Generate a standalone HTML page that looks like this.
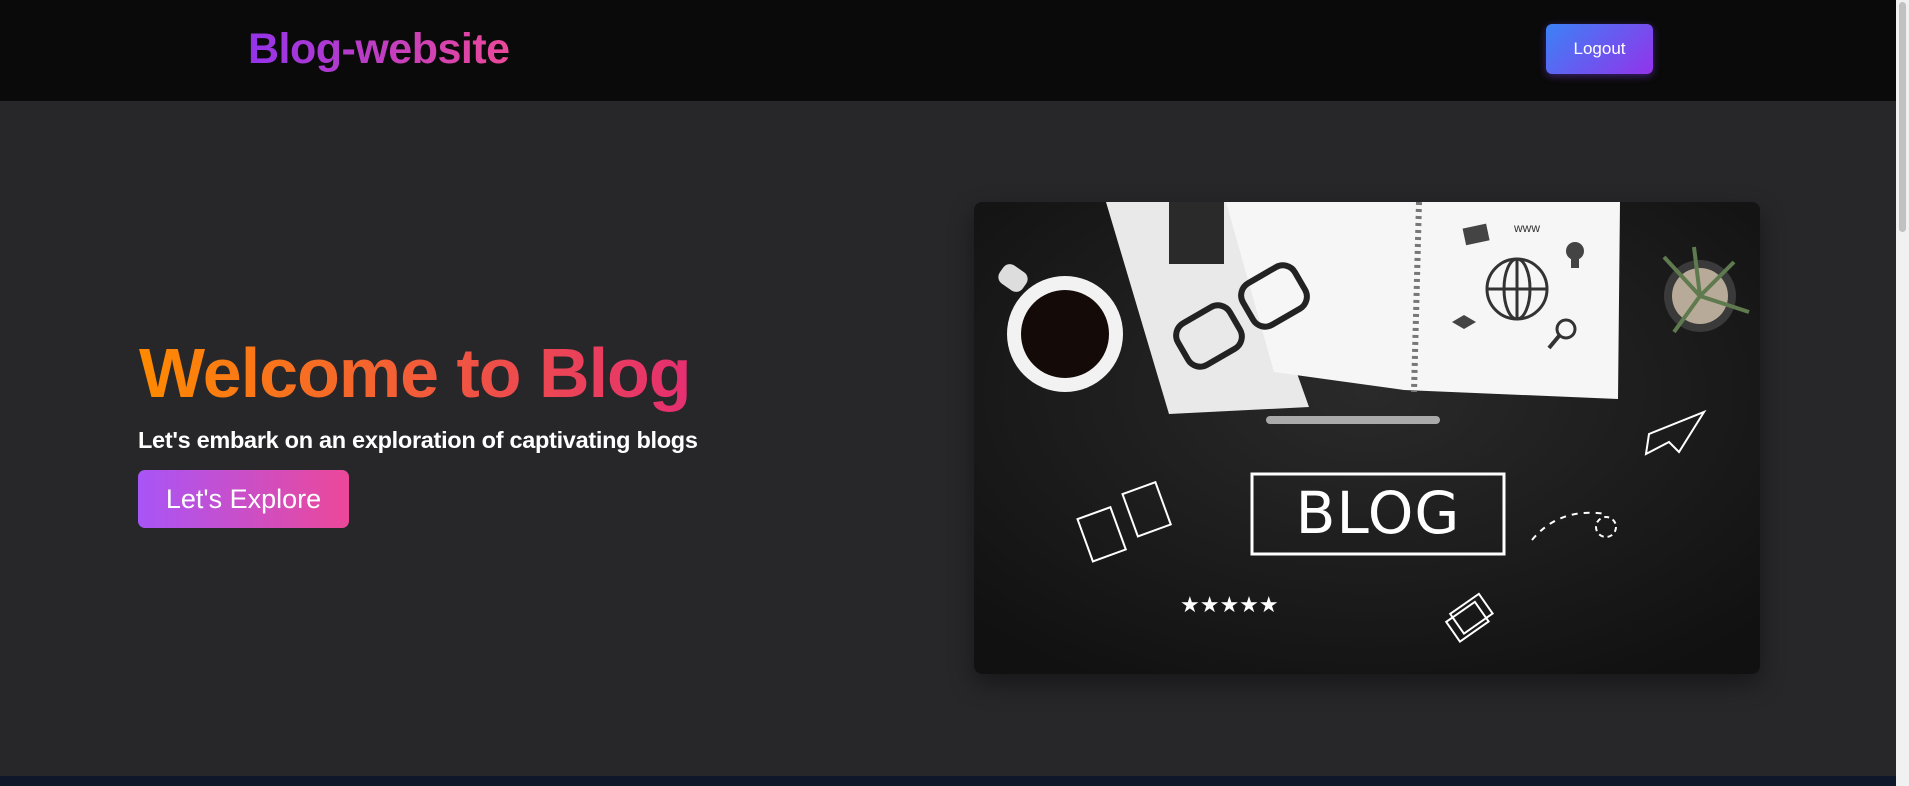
<!DOCTYPE html>
<html><head><meta charset="utf-8"><style>
*{margin:0;padding:0;box-sizing:border-box}
html,body{width:1909px;height:786px;overflow:hidden;background:#27272a;font-family:"Liberation Sans",sans-serif}
.hdr{position:absolute;left:0;top:0;width:1896px;height:101px;background:#0a0a0a}
.logo{position:absolute;left:248px;top:25px;font-size:43px;font-weight:bold;background:linear-gradient(90deg,#9333ea,#ec4899);-webkit-background-clip:text;background-clip:text;color:transparent;letter-spacing:-0.5px}
.logout{position:absolute;left:1546px;top:24px;width:107px;height:50px;border-radius:6px;background:linear-gradient(135deg,#3b82f6,#9333ea);color:#fff;font-size:17px;display:flex;align-items:center;justify-content:center;box-shadow:0 2px 8px rgba(120,60,220,.5)}
.sb{position:absolute;right:0;top:0;width:13px;height:786px;background:#f1f1f1}
.sb div{position:absolute;left:3px;top:2px;width:7px;height:230px;background:#c1c1c1;border-radius:4px}
h1{position:absolute;left:139px;top:331px;font-size:70px;font-weight:bold;letter-spacing:-1px;background:linear-gradient(90deg,#ff8a00,#e52e71);-webkit-background-clip:text;background-clip:text;color:transparent;line-height:84px}
.sub{position:absolute;left:138px;top:427px;font-size:23.5px;font-weight:bold;color:#fff;letter-spacing:-0.3px}
.btn{position:absolute;left:138px;top:470px;width:211px;height:58px;border-radius:7px;background:linear-gradient(90deg,#a855f7,#ec4899);color:#fff;font-size:27px;display:flex;align-items:center;justify-content:center}
.img{position:absolute;left:974px;top:202px;width:786px;height:472px;border-radius:8px;overflow:hidden;box-shadow:0 10px 25px rgba(0,0,0,.4)}
.foot{position:absolute;left:0;top:776px;width:1896px;height:10px;background:#0f172a}
</style></head><body>
<div class="hdr"><div class="logo">Blog-website</div><div class="logout">Logout</div></div>
<div class="sb"><div></div></div>
<h1>Welcome to Blog</h1>
<div class="sub">Let's embark on an exploration of captivating blogs</div>
<div class="btn">Let's Explore</div>
<div class="img">
<svg width="786" height="472" viewBox="0 0 786 472">
<defs><radialGradient id="bg" cx="50%" cy="40%" r="70%"><stop offset="0" stop-color="#2a2a2a"/><stop offset="1" stop-color="#111"/></radialGradient></defs>
<rect width="786" height="472" fill="url(#bg)"/>
<polygon points="132,0 262,0 335,205 195,212" fill="#e9e9e9"/>
<rect x="195" y="0" width="55" height="62" fill="#2a2a2a"/>
<polygon points="252,0 646,0 644,197 430,188 300,170" fill="#f6f6f6"/>
<line x1="445" y1="0" x2="440" y2="190" stroke="#777" stroke-width="6" stroke-dasharray="3 4"/>
<g fill="none" stroke="#222" stroke-width="6">
<rect x="205" y="110" width="60" height="48" rx="14" transform="rotate(-30 235 134)"/>
<rect x="270" y="70" width="60" height="48" rx="14" transform="rotate(-30 300 94)"/>
</g>
<circle cx="91" cy="132" r="58" fill="#f2f2f2"/>
<rect x="25" y="65" width="28" height="22" rx="8" fill="#ddd" transform="rotate(35 39 76)"/>
<circle cx="91" cy="132" r="44" fill="#140b08"/>
<circle cx="543" cy="87" r="30" fill="none" stroke="#333" stroke-width="3"/>
<ellipse cx="543" cy="87" rx="13" ry="30" fill="none" stroke="#333" stroke-width="3"/>
<line x1="513" y1="87" x2="573" y2="87" stroke="#333" stroke-width="3"/>
<line x1="543" y1="57" x2="543" y2="117" stroke="#333" stroke-width="3"/>
<rect x="490" y="24" width="24" height="17" fill="#444" transform="rotate(-12 502 32)"/>
<text x="540" y="30" font-size="12" fill="#333" font-family="Liberation Sans">www</text>
<circle cx="601" cy="49" r="9" fill="#444"/><rect x="597" y="56" width="8" height="10" fill="#444"/>
<polygon points="478,120 490,113 502,120 490,127" fill="#444"/>
<circle cx="592" cy="127" r="9" fill="none" stroke="#333" stroke-width="3"/><line x1="585" y1="134" x2="575" y2="146" stroke="#333" stroke-width="4"/>
<circle cx="726" cy="94" r="36" fill="#3a3a3a"/><circle cx="726" cy="94" r="28" fill="#b8aa98"/>
<g stroke="#5e7a4e" stroke-width="4"><line x1="726" y1="94" x2="690" y2="55"/><line x1="726" y1="94" x2="760" y2="60"/><line x1="726" y1="94" x2="775" y2="110"/><line x1="726" y1="94" x2="700" y2="130"/><line x1="726" y1="94" x2="720" y2="45"/></g>
<rect x="292" y="214" width="174" height="8" rx="4" fill="#aaa"/>
<rect x="278" y="272" width="252" height="80" fill="none" stroke="#fff" stroke-width="3"/>
<text x="404" y="331" text-anchor="middle" font-size="58" fill="#fff" font-family="DejaVu Sans" font-weight="normal" letter-spacing="1">BLOG</text>
<g fill="none" stroke="#fff" stroke-width="2">
<rect x="110" y="310" width="35" height="45" transform="rotate(-20 127 332)"/>
<rect x="155" y="285" width="35" height="45" transform="rotate(-20 172 307)"/>
<polygon points="675,232 730,210 705,250 695,240 672,252" />
<path d="M558,338 Q585,305 632,312" stroke-dasharray="6 6"/>
<circle cx="632" cy="325" r="10" stroke-dasharray="5 4"/>
<rect x="480" y="400" width="35" height="24" transform="rotate(-35 497 412)"/>
<rect x="476" y="408" width="35" height="24" transform="rotate(-35 493 420)"/>
</g>
<text x="206" y="410" font-size="22" fill="#fff" font-family="DejaVu Sans">★★★★★</text>
</svg>
</div>
<div class="foot"></div>
</body></html>
